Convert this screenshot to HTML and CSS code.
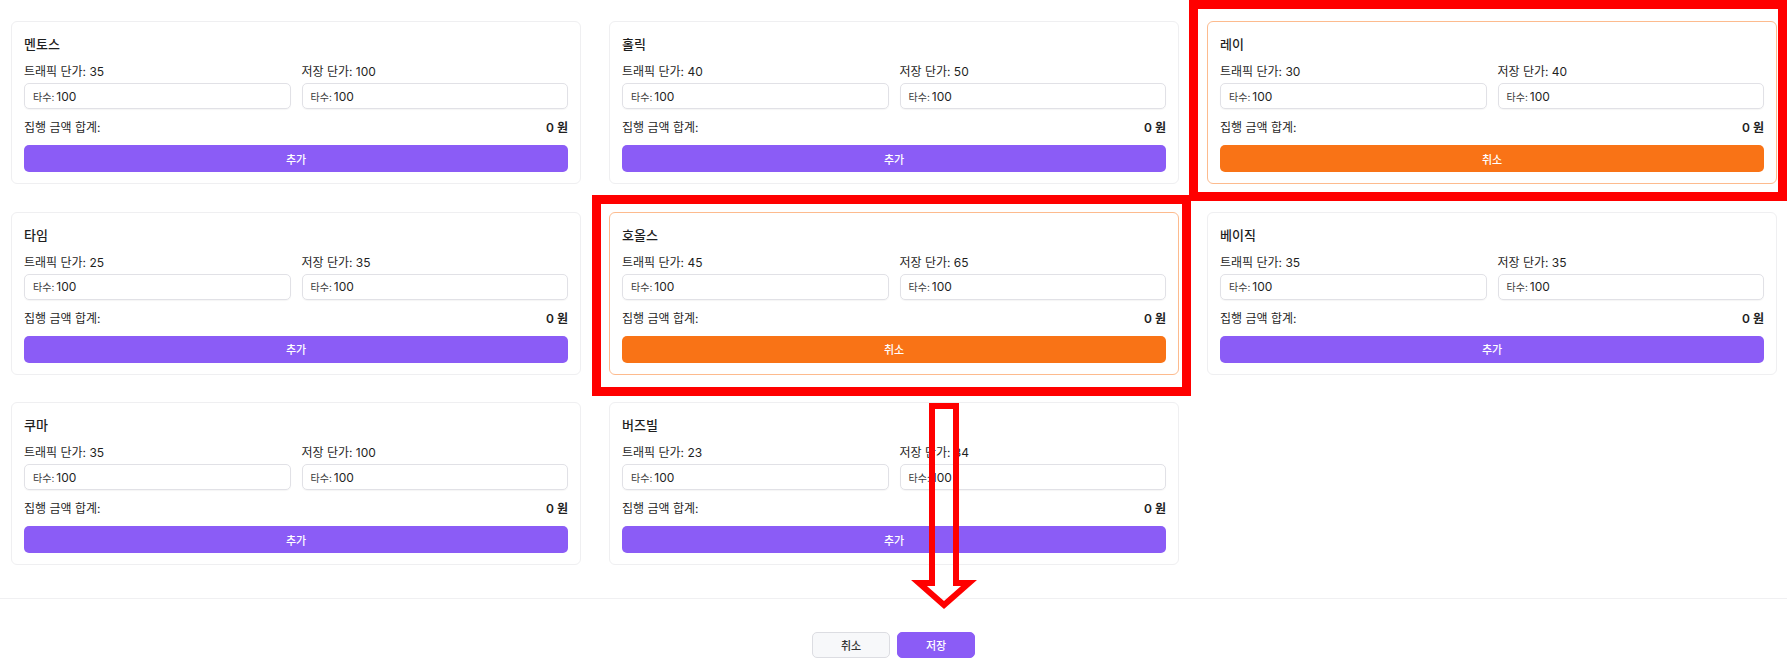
FILE: index.html
```html
<!DOCTYPE html>
<html lang="ko">
<head>
  <meta charset="UTF-8">
  <meta name="viewport" content="width=device-width, initial-scale=1.0">
  <title>매체 단가 설정</title>
  <link rel="stylesheet" href="styles.css">
</head>
<body>
  <div class="page">
    <div class="grid">
      <div class="card">
        <h3 class="card-title">멘토스</h3>
        <div class="fields">
          <div class="field">
            <div class="field-label">트래픽 단가: 35</div>
            <label class="qty"><span class="qty-prefix">타수:</span><input type="text" value="100"></label>
          </div>
          <div class="field">
            <div class="field-label">저장 단가: 100</div>
            <label class="qty"><span class="qty-prefix">타수:</span><input type="text" value="100"></label>
          </div>
        </div>
        <div class="total"><span>집행 금액 합계:</span><strong>0 원</strong></div>
        <button class="btn btn-add">추가</button>
      </div>

      <div class="card">
        <h3 class="card-title">홀릭</h3>
        <div class="fields">
          <div class="field">
            <div class="field-label">트래픽 단가: 40</div>
            <label class="qty"><span class="qty-prefix">타수:</span><input type="text" value="100"></label>
          </div>
          <div class="field">
            <div class="field-label">저장 단가: 50</div>
            <label class="qty"><span class="qty-prefix">타수:</span><input type="text" value="100"></label>
          </div>
        </div>
        <div class="total"><span>집행 금액 합계:</span><strong>0 원</strong></div>
        <button class="btn btn-add">추가</button>
      </div>

      <div class="card selected">
        <h3 class="card-title">레이</h3>
        <div class="fields">
          <div class="field">
            <div class="field-label">트래픽 단가: 30</div>
            <label class="qty"><span class="qty-prefix">타수:</span><input type="text" value="100"></label>
          </div>
          <div class="field">
            <div class="field-label">저장 단가: 40</div>
            <label class="qty"><span class="qty-prefix">타수:</span><input type="text" value="100"></label>
          </div>
        </div>
        <div class="total"><span>집행 금액 합계:</span><strong>0 원</strong></div>
        <button class="btn btn-remove">취소</button>
      </div>

      <div class="card">
        <h3 class="card-title">타임</h3>
        <div class="fields">
          <div class="field">
            <div class="field-label">트래픽 단가: 25</div>
            <label class="qty"><span class="qty-prefix">타수:</span><input type="text" value="100"></label>
          </div>
          <div class="field">
            <div class="field-label">저장 단가: 35</div>
            <label class="qty"><span class="qty-prefix">타수:</span><input type="text" value="100"></label>
          </div>
        </div>
        <div class="total"><span>집행 금액 합계:</span><strong>0 원</strong></div>
        <button class="btn btn-add">추가</button>
      </div>

      <div class="card selected">
        <h3 class="card-title">호올스</h3>
        <div class="fields">
          <div class="field">
            <div class="field-label">트래픽 단가: 45</div>
            <label class="qty"><span class="qty-prefix">타수:</span><input type="text" value="100"></label>
          </div>
          <div class="field">
            <div class="field-label">저장 단가: 65</div>
            <label class="qty"><span class="qty-prefix">타수:</span><input type="text" value="100"></label>
          </div>
        </div>
        <div class="total"><span>집행 금액 합계:</span><strong>0 원</strong></div>
        <button class="btn btn-remove">취소</button>
      </div>

      <div class="card">
        <h3 class="card-title">베이직</h3>
        <div class="fields">
          <div class="field">
            <div class="field-label">트래픽 단가: 35</div>
            <label class="qty"><span class="qty-prefix">타수:</span><input type="text" value="100"></label>
          </div>
          <div class="field">
            <div class="field-label">저장 단가: 35</div>
            <label class="qty"><span class="qty-prefix">타수:</span><input type="text" value="100"></label>
          </div>
        </div>
        <div class="total"><span>집행 금액 합계:</span><strong>0 원</strong></div>
        <button class="btn btn-add">추가</button>
      </div>

      <div class="card">
        <h3 class="card-title">쿠마</h3>
        <div class="fields">
          <div class="field">
            <div class="field-label">트래픽 단가: 35</div>
            <label class="qty"><span class="qty-prefix">타수:</span><input type="text" value="100"></label>
          </div>
          <div class="field">
            <div class="field-label">저장 단가: 100</div>
            <label class="qty"><span class="qty-prefix">타수:</span><input type="text" value="100"></label>
          </div>
        </div>
        <div class="total"><span>집행 금액 합계:</span><strong>0 원</strong></div>
        <button class="btn btn-add">추가</button>
      </div>

      <div class="card">
        <h3 class="card-title">버즈빌</h3>
        <div class="fields">
          <div class="field">
            <div class="field-label">트래픽 단가: 23</div>
            <label class="qty"><span class="qty-prefix">타수:</span><input type="text" value="100"></label>
          </div>
          <div class="field">
            <div class="field-label">저장 단가: 34</div>
            <label class="qty"><span class="qty-prefix">타수:</span><input type="text" value="100"></label>
          </div>
        </div>
        <div class="total"><span>집행 금액 합계:</span><strong>0 원</strong></div>
        <button class="btn btn-add">추가</button>
      </div>
    </div>

    <div class="footer">
      <button class="btn-cancel">취소</button>
      <button class="btn-save">저장</button>
    </div>

    <!-- annotation marks drawn over the screenshot -->
    <div class="mark mark-top"></div>
    <div class="mark mark-mid"></div>
    <svg class="arrow" width="70" height="215" viewBox="0 0 70 215">
      <polygon points="22,6 46,6 46,183 59,183 34,205 9,183 22,183" fill="none" stroke="#ff0000" stroke-width="6"/>
    </svg>
  </div>
</body>
</html>
```

FILE: styles.css
```css
html, body {
  margin: 0;
  padding: 0;
  background: #ffffff;
  overflow: hidden;
}
body {
  font-family: "Inter", "Noto Sans CJK KR", sans-serif;
  color: #1f1f1f;
}
.page {
  position: relative;
  width: 1787px;
  height: 672px;
}
.grid {
  display: grid;
  grid-template-columns: repeat(3, 570px);
  column-gap: 28px;
  row-gap: 27.5px;
  padding: 21px 10px 33px 11px;
}
.card {
  box-sizing: border-box;
  height: 163px;
  border: 1px solid #efeff1;
  border-radius: 6px;
  padding: 13px 12px 12px;
  background: #fff;
}
.card.selected {
  border-color: #fdbb8e;
}
.card-title {
  margin: 0 0 11px;
  font-size: 13px;
  line-height: 18px;
  font-weight: 500;
}
.fields {
  display: grid;
  grid-template-columns: 1fr 1fr;
  column-gap: 11px;
}
.field-label {
  font-size: 12px;
  line-height: 16px;
  margin-bottom: 3px;
}
.qty {
  box-sizing: border-box;
  display: flex;
  align-items: center;
  height: 26px;
  padding: 0 8px;
  border: 1px solid #e1e1e6;
  border-radius: 5px;
  box-shadow: 0 1px 1px rgba(0, 0, 0, 0.04);
}
.qty-prefix {
  font-size: 10px;
  color: #3a3a3a;
  margin-right: 2px;
}
.qty input {
  flex: 1;
  min-width: 0;
  border: none;
  outline: none;
  padding: 0;
  font-family: inherit;
  font-size: 12px;
  color: #1f1f1f;
  background: transparent;
}
.total {
  display: flex;
  justify-content: space-between;
  margin: 11px 0 9px;
  font-size: 12px;
  line-height: 16px;
}
.total strong {
  font-weight: 600;
}
.btn {
  display: block;
  width: 100%;
  height: 27px;
  border: none;
  border-radius: 5px;
  color: #fff;
  font-family: inherit;
  font-size: 11px;
  font-weight: 500;
  cursor: pointer;
}
.btn-add {
  background: #8b5cf6;
}
.btn-remove {
  background: #f97316;
}
.footer {
  display: flex;
  justify-content: center;
  gap: 7px;
  border-top: 1px solid #f0f0f2;
  padding: 33px 0 10px;
}
.footer button {
  box-sizing: border-box;
  width: 78px;
  height: 26px;
  border-radius: 5px;
  font-family: inherit;
  font-size: 11px;
  font-weight: 500;
  cursor: pointer;
}
.btn-cancel {
  background: #f7f8fa;
  border: 1px solid #dcdde2;
  color: #333;
}
.btn-save {
  background: #8b5cf6;
  border: 1px solid #8b5cf6;
  color: #fff;
}
.mark {
  position: absolute;
  box-sizing: border-box;
  border: 9px solid #ff0000;
  pointer-events: none;
}
.mark-top {
  left: 1189px;
  top: 0;
  width: 598px;
  height: 201px;
}
.mark-mid {
  left: 592px;
  top: 195px;
  width: 599px;
  height: 201px;
}
.arrow {
  position: absolute;
  left: 910px;
  top: 400px;
  pointer-events: none;
}
```
